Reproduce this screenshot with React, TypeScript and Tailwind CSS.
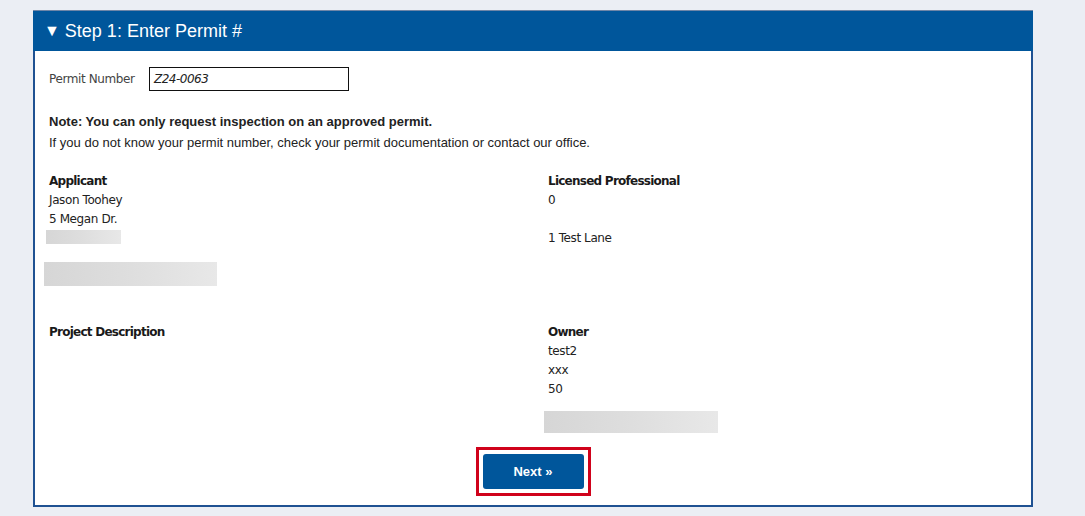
const tah = "font-['DejaVu_Sans',sans-serif] text-[12px] tracking-[-0.4px] text-[#222]";
const lbl = "font-bold tracking-[-0.75px] text-[#1a1a1a]";

function Blur({ className }: { className: string }) {
  return (
    <div
      className={`bg-gradient-to-r from-[#d6d6d6] via-[#dedede] to-[#e8e8e8] ${className}`}
    />
  );
}

export default function App() {
  return (
    <div className="min-h-[516px] bg-[#ebeef4] pt-[10px] font-['Liberation_Sans',Arial,sans-serif]">
      <div className="ml-[33px] w-[1000px] border-x-2 border-b-2 border-[#1f5192] bg-white">
        <div className="flex h-[41px] items-center border-t border-[#6f86a8] bg-[#00569b] pl-[11px] text-[18px] text-white -mx-[2px]">
          <span className="mr-[5px] text-[16px]">▼</span>
          <span>Step 1: Enter Permit #</span>
        </div>

        <div className="px-[14px] pt-[16px] pb-[9px]">
          <div className="flex items-center">
            <span className={`${tah} text-[#444] w-[100px]`}>Permit Number</span>
            <div className="flex h-[24px] w-[200px] items-center border border-[#111] pl-[4px] text-[12px] italic text-[#222] font-['DejaVu_Sans',sans-serif] tracking-[-0.5px]">
              Z24-0063
            </div>
          </div>

          <div className="mt-[22px] text-[13px] font-bold leading-[18px] text-[#222]">
            Note: You can only request inspection on an approved permit.
          </div>
          <div className="mt-[3px] text-[13px] leading-[18px] text-[#222]">
            If you do not know your permit number, check your permit documentation or contact our office.
          </div>

          <div className="mt-[20px] grid grid-cols-[499px_1fr]">
            <div className={`${tah} leading-[19px]`}>
              <div className={lbl}>Applicant</div>
              <div>Jason Toohey</div>
              <div>5 Megan Dr.</div>
              <Blur className="ml-[-3px] mt-[1px] h-[14px] w-[75px]" />
              <Blur className="ml-[-5px] mt-[18px] h-[24px] w-[173px]" />
              <div className={`mt-[37px] ${lbl}`}>Project Description</div>
            </div>
            <div className={`${tah} leading-[19px]`}>
              <div className={lbl}>Licensed Professional</div>
              <div>0</div>
              <div className="h-[19px]" />
              <div>1 Test Lane</div>
              <div className="h-[75px]" />
              <div className={lbl}>Owner</div>
              <div>test2</div>
              <div>xxx</div>
              <div>50</div>
              <Blur className="ml-[-4px] mt-[12px] h-[22px] w-[174px]" />
            </div>
          </div>

          <div className="mt-[14px] flex justify-center">
            <div className="border-[3px] border-[#d0021b] p-[4px]">
              <button className="h-[35px] w-[101px] rounded-[3px] bg-[#00569b] text-[13px] font-bold text-white">
                Next »
              </button>
            </div>
          </div>
        </div>
      </div>
    </div>
  );
}
